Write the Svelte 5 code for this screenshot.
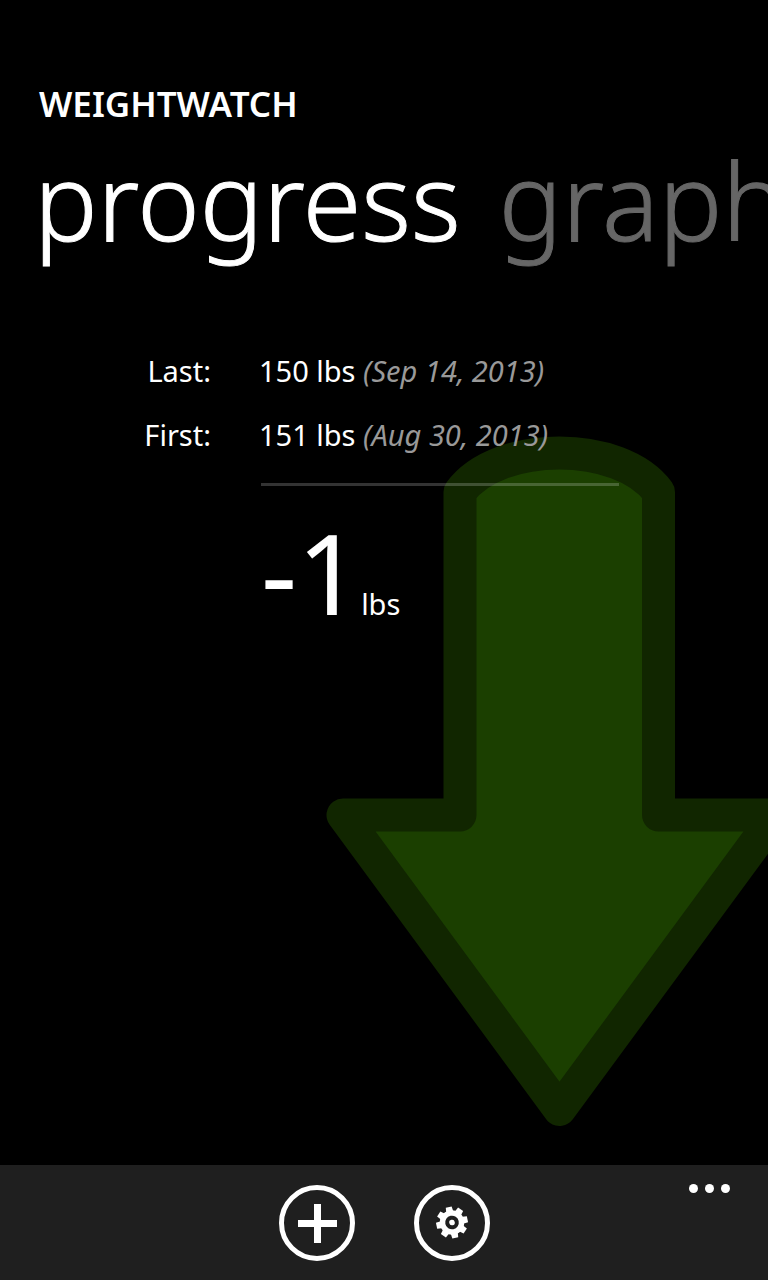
<script>
  const views = ['progress', 'graph'];
  const entries = [
    { label: 'Last:', weight: '150 lbs', date: '(Sep 14, 2013)' },
    { label: 'First:', weight: '151 lbs', date: '(Aug 30, 2013)' }
  ];
  const teeth = [0, 45, 90, 135, 180, 225, 270, 315];
  let active = $state(0);
</script>

<div class="screen">
  <main>
    <svg class="arrow" viewBox="0 0 468 692" aria-hidden="true">
      <path
        d="M134 57 C172 5 294.500 5 332.500 57 V380 H450 L233.500 674.500 L17 380 H134 Z"
        fill="#1b3f00"
        stroke="#112600"
        stroke-width="33"
        stroke-linejoin="round"
      />
    </svg>

    <h1>WEIGHTWATCH</h1>
    <nav>
      {#each views as view, i}
        <button class="view" class:active={i === active} onclick={() => (active = i)}>{view}</button>
      {/each}
    </nav>

    <section class="summary">
      <dl>
        {#each entries as entry}
          <dt>{entry.label}</dt>
          <dd>{entry.weight} <em>{entry.date}</em></dd>
        {/each}
      </dl>
      <div class="result">
        <hr />
        <p><strong>-1</strong><span>lbs</span></p>
      </div>
    </section>
  </main>

  <footer>
    <button class="round" aria-label="Add">
      <svg viewBox="0 0 76 76" aria-hidden="true">
        <circle cx="38" cy="38" r="35.500" fill="none" stroke="#fff" stroke-width="5" />
        <path d="M35 19 H42 V35 H58 V42 H42 V58 H35 V42 H19 V35 H35 Z" fill="#fff" />
      </svg>
    </button>
    <button class="round" aria-label="Settings">
      <svg viewBox="0 0 76 76" aria-hidden="true">
        <circle cx="38" cy="38" r="35.500" fill="none" stroke="#fff" stroke-width="5" />
        <g transform="translate(38 37.500) rotate(-12)">
          {#each teeth as angle}
            <path d="M-3 -15.800 H3 L3.800 -9 H-3.800 Z" fill="#fff" transform="rotate({angle})" />
          {/each}
          <circle r="9.500" fill="none" stroke="#fff" stroke-width="5.400" />
          <circle r="2.800" fill="#fff" />
        </g>
      </svg>
    </button>
    <button class="more" aria-label="More">
      <i></i><i></i><i></i>
    </button>
  </footer>
</div>

<style>
  :global(body) {
    margin: 0;
    background: #000;
  }
  .screen {
    display: flex;
    flex-direction: column;
    min-height: 100vh;
    background: #000;
    color: #fff;
    font-family: "Noto Sans", "Open Sans", sans-serif;
  }
  main {
    position: relative;
    flex: 1;
    overflow: hidden;
    padding: 80px 0 40px;
  }
  .arrow {
    position: absolute;
    left: 326px;
    bottom: 38px;
    width: 468px;
  }
  h1,
  nav,
  .summary {
    position: relative;
  }
  button {
    border: 0;
    padding: 0;
    background: none;
    color: inherit;
    font: inherit;
    cursor: pointer;
  }
  h1 {
    margin: 0 0 0 39px;
    font-size: 35px;
    line-height: 48px;
    font-weight: 600;
  }
  nav {
    display: flex;
    gap: 38px;
    padding-left: 34px;
    white-space: nowrap;
  }
  .view {
    font-size: 106px;
    line-height: 144px;
    font-weight: 300;
    color: #666;
    -webkit-text-stroke: 1px currentColor;
  }
  .view.active {
    color: #fff;
  }
  .summary {
    padding-top: 67px;
    font-size: 29px;
    line-height: 64px;
  }
  dl {
    display: grid;
    grid-template-columns: 211px 1fr;
    column-gap: 48px;
    margin: 0;
  }
  dt {
    text-align: right;
  }
  dd {
    margin: 0;
  }
  em {
    color: #999;
  }
  .result {
    padding-left: 261px;
  }
  hr {
    width: 358px;
    height: 3px;
    margin: 16px 0 0;
    border: 0;
    background: rgba(255, 255, 255, 0.2);
  }
  p {
    display: flex;
    align-items: baseline;
    margin: 22px 0 0;
  }
  strong {
    font-size: 112px;
    line-height: 128px;
    font-weight: 400;
  }
  footer {
    position: relative;
    display: flex;
    justify-content: center;
    gap: 59px;
    padding: 20px 0 19px;
    background: #1f1f1f;
  }
  .round,
  .round svg {
    display: block;
    width: 76px;
    height: 76px;
  }
  .more {
    position: absolute;
    top: 15px;
    right: 38px;
    display: flex;
    gap: 7px;
    padding: 4px 0;
  }
  .more i {
    width: 9px;
    height: 9px;
    border-radius: 50%;
    background: #fff;
  }
</style>
